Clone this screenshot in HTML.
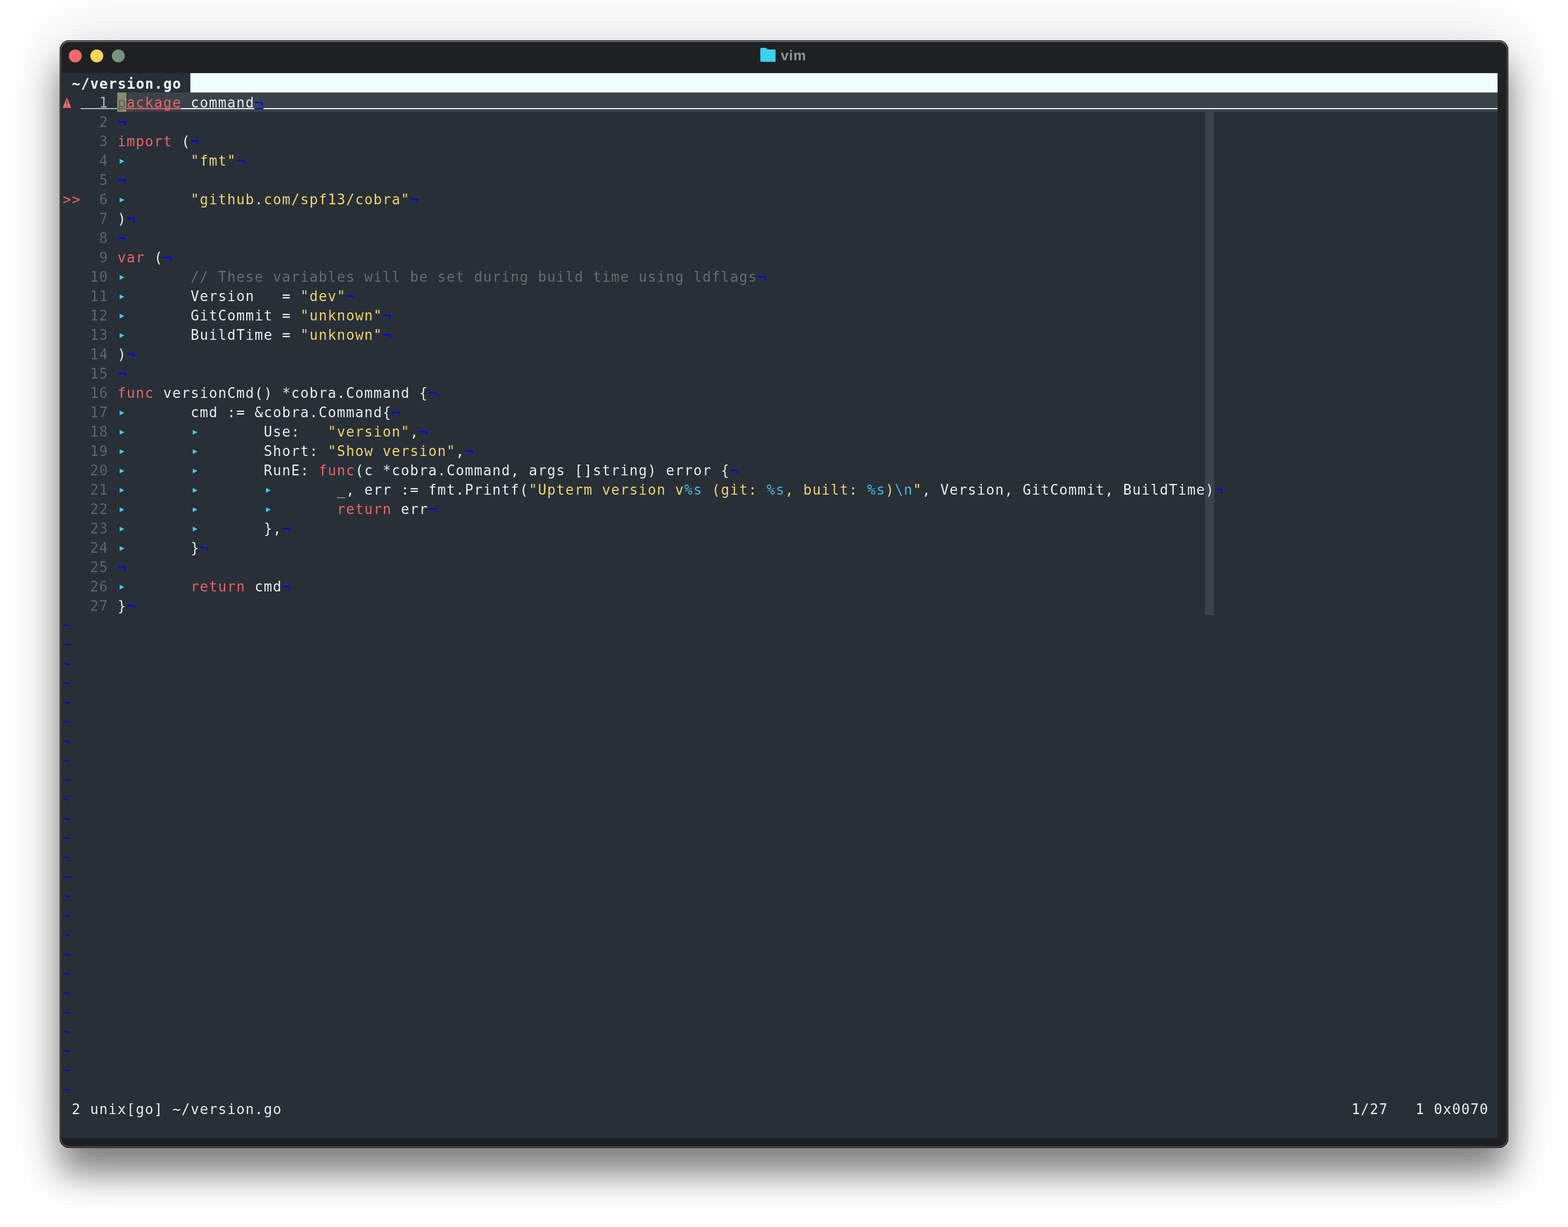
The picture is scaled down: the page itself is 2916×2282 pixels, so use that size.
<!DOCTYPE html>
<html lang="en"><head><meta charset="utf-8"><title>vim</title>
<style>
*{box-sizing:border-box}
html,body{margin:0;padding:0}
html,body{background:#fff}
body{width:2916px;height:2282px;font-family:"DejaVu Sans Mono","Liberation Mono",monospace}
#stage{position:relative;width:2916px;height:2282px;overflow:hidden;background:#fff}
#win{position:absolute;left:111px;top:75px;width:2694px;height:2060px;border-radius:18px;background:#1f2022;box-shadow:0 48px 64px rgba(0,0,0,.46), 0 0 120px rgba(0,0,0,.14)}
#win:after{content:"";position:absolute;inset:0;border-radius:18px;box-shadow:inset 0 0 0 1px #000, inset 0 2px 0 1px #6d7773, inset 0 0 0 3px #4f5352;pointer-events:none}
.tl{position:absolute;top:16.9px;width:24.2px;height:24.2px;border-radius:50%}
#ttl{position:absolute;left:0;right:0;top:0;height:60px;will-change:transform}
#ttxt{position:absolute;left:1341px;top:12.8px;font:bold 26.2px/30px "Liberation Sans",sans-serif;letter-spacing:0.8px;color:#8a9599;white-space:pre}
#fold{position:absolute;left:1302.9px;top:13.9px}
#term{position:absolute;left:5px;top:61px;width:2669px;height:1980px;background:#282f37;overflow:hidden}
.row{-webkit-text-stroke:0.2px #282f37;position:absolute;left:0;height:36px;line-height:36px;white-space:pre;font-size:26px;letter-spacing:1.3467px;color:#f0fffb;width:2669px}
.row>span{position:relative;top:1px;left:0.5px}
.row>.eol{left:1px}.row>.tl2{left:0}
.ne{display:inline-block;width:17px;height:36px;vertical-align:top;letter-spacing:0;transform:scale(1.02,1.18);transform-origin:50% 17px;-webkit-text-stroke-width:0}
.fg{color:#f0fffb}.kw{color:#f8686f}.st{color:#fae06a}.fm{color:#3ec8e3}.cm{color:#6c726f}.nr{color:#5f6a66}.eol{color:#0000ff}
.nc{color:#b4bfba}
.cur-row{-webkit-text-stroke-color:#3c424a}
.cur-row .nc,.cur-row .sg{-webkit-text-stroke-color:#282f37}
.cur-row .cur{-webkit-text-stroke-color:#8b8b6e}
.row>.tl2{top:0px}
.tb{color:#36d4f0;display:inline-block;width:17px;height:36px;letter-spacing:0;font-size:23px;text-align:center;line-height:36px;vertical-align:top;top:0.2px !important;left:0.6px}
.sg{display:inline-block;width:17px;letter-spacing:0}
.warn{position:absolute;left:0;top:9px}
.sg{position:relative;height:36px;vertical-align:top;top:0 !important}
#tabl{will-change:transform;position:absolute;left:0;top:0;height:36px;line-height:36px;font-size:26px;font-weight:bold;letter-spacing:1.3467px;white-space:pre;color:#f0fffb}
#tabl span{position:relative;top:1.6px;left:0.8px}
#txt{position:absolute;left:0;top:0;width:2669px;height:1980px;will-change:transform}
#tabf{position:absolute;left:238px;top:0;width:2431px;height:36px;background:#f0fffb}
#clbg{position:absolute;left:102px;top:36px;width:2567px;height:36px;background:#3c424a}
#cc{position:absolute;left:2125px;top:36px;width:17px;height:972px;background:#3c424a}
.ul{position:absolute;top:29px;height:2px}
.cur{color:#5a605c}
#curb{position:absolute;left:102px;top:36px;width:17px;height:36px;background:#8b8b6e}
</style></head>
<body>
<div id="stage">
<div id="win">
<div id="ttl">
<div class="tl" style="left:16.8px;background:#f7676e"></div>
<div class="tl" style="left:56.8px;background:#f8d65c"></div>
<div class="tl" style="left:96.8px;background:#769380"></div>
<svg id="fold" width="29" height="27" viewBox="0 0 29 27"><path d="M0 1.4 Q0 0 1.4 0 L9.6 0 Q10.3 0 10.9 0.6 L13.2 2.9 L26.9 2.9 Q28.3 2.9 28.3 4.3 L28.3 24.6 Q28.3 26 26.9 26 L1.4 26 Q0 26 0 24.6 Z" fill="#36d4f0"/></svg>
<div id="ttxt">vim</div>
</div>
<div id="term">
<div id="tabl"><span> ~/version.go </span></div><div id="tabf"></div>
<div id="clbg"></div><div id="cc"></div><div id="curb"></div>
<div id="txt">
<div style="position:absolute;left:0;top:36px;width:2669px;height:36px"><div class="ul" style="left:34px;width:68px;background:#b4bfba"></div><div class="ul" style="left:102px;width:17px;background:#5a605c"></div><div class="ul" style="left:119px;width:102px;background:#f8686f"></div><div class="ul" style="left:221px;width:136px;background:#f0fffb"></div><div class="ul" style="left:357px;width:17px;background:#0000ff"></div><div class="ul" style="left:374px;width:2295px;background:#f0fffb"></div></div>
<div class="row cur-row" style="top:36px"><span class="sg"><svg class="warn" viewBox="0 0 16 20" width="16" height="20"><path d="M7.5 0.9 L15.2 19.2 L-0.1 19.2 Z" fill="#f8686f" stroke="#f8686f" stroke-width="0.6" stroke-linejoin="round"/><rect x="6.7" y="6.2" width="1.6" height="7.8" rx="0.6" fill="#3a3328"/><circle cx="7.5" cy="16.5" r="1.1" fill="#3a3328"/></svg></span><span class="sg"> </span><span class="nc">  1 </span><span class="cur">p</span><span class="kw">ackage</span><span class="fg"> command</span><span class="eol ne">¬</span></div>
<div class="row" style="top:72px">  <span class="nr">  2 </span><span class="eol ne">¬</span></div>
<div class="row" style="top:108px">  <span class="nr">  3 </span><span class="kw">import</span><span class="fg"> (</span><span class="eol ne">¬</span></div>
<div class="row" style="top:144px">  <span class="nr">  4 </span><span class="tb">▸</span><span class="fg">       </span><span class="st">"fmt"</span><span class="eol ne">¬</span></div>
<div class="row" style="top:180px">  <span class="nr">  5 </span><span class="eol ne">¬</span></div>
<div class="row" style="top:216px"><span class="kw">&gt;&gt;</span><span class="nr">  6 </span><span class="tb">▸</span><span class="fg">       </span><span class="st">"github.com/spf13/cobra"</span><span class="eol ne">¬</span></div>
<div class="row" style="top:252px">  <span class="nr">  7 </span><span class="fg">)</span><span class="eol ne">¬</span></div>
<div class="row" style="top:288px">  <span class="nr">  8 </span><span class="eol ne">¬</span></div>
<div class="row" style="top:324px">  <span class="nr">  9 </span><span class="kw">var</span><span class="fg"> (</span><span class="eol ne">¬</span></div>
<div class="row" style="top:360px">  <span class="nr"> 10 </span><span class="tb">▸</span><span class="fg">       </span><span class="cm">// These variables will be set during build time using ldflags</span><span class="eol ne">¬</span></div>
<div class="row" style="top:396px">  <span class="nr"> 11 </span><span class="tb">▸</span><span class="fg">       </span><span class="fg">Version   = </span><span class="st">"dev"</span><span class="eol ne">¬</span></div>
<div class="row" style="top:432px">  <span class="nr"> 12 </span><span class="tb">▸</span><span class="fg">       </span><span class="fg">GitCommit = </span><span class="st">"unknown"</span><span class="eol ne">¬</span></div>
<div class="row" style="top:468px">  <span class="nr"> 13 </span><span class="tb">▸</span><span class="fg">       </span><span class="fg">BuildTime = </span><span class="st">"unknown"</span><span class="eol ne">¬</span></div>
<div class="row" style="top:504px">  <span class="nr"> 14 </span><span class="fg">)</span><span class="eol ne">¬</span></div>
<div class="row" style="top:540px">  <span class="nr"> 15 </span><span class="eol ne">¬</span></div>
<div class="row" style="top:576px">  <span class="nr"> 16 </span><span class="kw">func</span><span class="fg"> versionCmd() *cobra.Command {</span><span class="eol ne">¬</span></div>
<div class="row" style="top:612px">  <span class="nr"> 17 </span><span class="tb">▸</span><span class="fg">       </span><span class="fg">cmd := &amp;cobra.Command{</span><span class="eol ne">¬</span></div>
<div class="row" style="top:648px">  <span class="nr"> 18 </span><span class="tb">▸</span><span class="fg">       </span><span class="tb">▸</span><span class="fg">       </span><span class="fg">Use:   </span><span class="st">"version"</span><span class="fg">,</span><span class="eol ne">¬</span></div>
<div class="row" style="top:684px">  <span class="nr"> 19 </span><span class="tb">▸</span><span class="fg">       </span><span class="tb">▸</span><span class="fg">       </span><span class="fg">Short: </span><span class="st">"Show version"</span><span class="fg">,</span><span class="eol ne">¬</span></div>
<div class="row" style="top:720px">  <span class="nr"> 20 </span><span class="tb">▸</span><span class="fg">       </span><span class="tb">▸</span><span class="fg">       </span><span class="fg">RunE: </span><span class="kw">func</span><span class="fg">(c *cobra.Command, args []string) error {</span><span class="eol ne">¬</span></div>
<div class="row" style="top:756px">  <span class="nr"> 21 </span><span class="tb">▸</span><span class="fg">       </span><span class="tb">▸</span><span class="fg">       </span><span class="tb">▸</span><span class="fg">       </span><span class="fg">_, err := fmt.Printf(</span><span class="st">"Upterm version v</span><span class="fm">%s</span><span class="st"> (git: </span><span class="fm">%s</span><span class="st">, built: </span><span class="fm">%s</span><span class="st">)</span><span class="fm">\n</span><span class="st">"</span><span class="fg">, Version, GitCommit, BuildTime)</span><span class="eol ne">¬</span></div>
<div class="row" style="top:792px">  <span class="nr"> 22 </span><span class="tb">▸</span><span class="fg">       </span><span class="tb">▸</span><span class="fg">       </span><span class="tb">▸</span><span class="fg">       </span><span class="kw">return</span><span class="fg"> err</span><span class="eol ne">¬</span></div>
<div class="row" style="top:828px">  <span class="nr"> 23 </span><span class="tb">▸</span><span class="fg">       </span><span class="tb">▸</span><span class="fg">       </span><span class="fg">},</span><span class="eol ne">¬</span></div>
<div class="row" style="top:864px">  <span class="nr"> 24 </span><span class="tb">▸</span><span class="fg">       </span><span class="fg">}</span><span class="eol ne">¬</span></div>
<div class="row" style="top:900px">  <span class="nr"> 25 </span><span class="eol ne">¬</span></div>
<div class="row" style="top:936px">  <span class="nr"> 26 </span><span class="tb">▸</span><span class="fg">       </span><span class="kw">return</span><span class="fg"> cmd</span><span class="eol ne">¬</span></div>
<div class="row" style="top:972px">  <span class="nr"> 27 </span><span class="fg">}</span><span class="eol ne">¬</span></div>
<div class="row" style="top:1008px"><span class="eol tl2">~</span></div>
<div class="row" style="top:1044px"><span class="eol tl2">~</span></div>
<div class="row" style="top:1080px"><span class="eol tl2">~</span></div>
<div class="row" style="top:1116px"><span class="eol tl2">~</span></div>
<div class="row" style="top:1152px"><span class="eol tl2">~</span></div>
<div class="row" style="top:1188px"><span class="eol tl2">~</span></div>
<div class="row" style="top:1224px"><span class="eol tl2">~</span></div>
<div class="row" style="top:1260px"><span class="eol tl2">~</span></div>
<div class="row" style="top:1296px"><span class="eol tl2">~</span></div>
<div class="row" style="top:1332px"><span class="eol tl2">~</span></div>
<div class="row" style="top:1368px"><span class="eol tl2">~</span></div>
<div class="row" style="top:1404px"><span class="eol tl2">~</span></div>
<div class="row" style="top:1440px"><span class="eol tl2">~</span></div>
<div class="row" style="top:1476px"><span class="eol tl2">~</span></div>
<div class="row" style="top:1512px"><span class="eol tl2">~</span></div>
<div class="row" style="top:1548px"><span class="eol tl2">~</span></div>
<div class="row" style="top:1584px"><span class="eol tl2">~</span></div>
<div class="row" style="top:1620px"><span class="eol tl2">~</span></div>
<div class="row" style="top:1656px"><span class="eol tl2">~</span></div>
<div class="row" style="top:1692px"><span class="eol tl2">~</span></div>
<div class="row" style="top:1728px"><span class="eol tl2">~</span></div>
<div class="row" style="top:1764px"><span class="eol tl2">~</span></div>
<div class="row" style="top:1800px"><span class="eol tl2">~</span></div>
<div class="row" style="top:1836px"><span class="eol tl2">~</span></div>
<div class="row" style="top:1872px"><span class="eol tl2">~</span></div>
<div class="row" style="top:1908px"><span class="fg"> 2 unix[go] ~/version.go                                                                                                                     1/27   1 0x0070 </span></div>
</div>
</div>
</div>
</div>
</body></html>
